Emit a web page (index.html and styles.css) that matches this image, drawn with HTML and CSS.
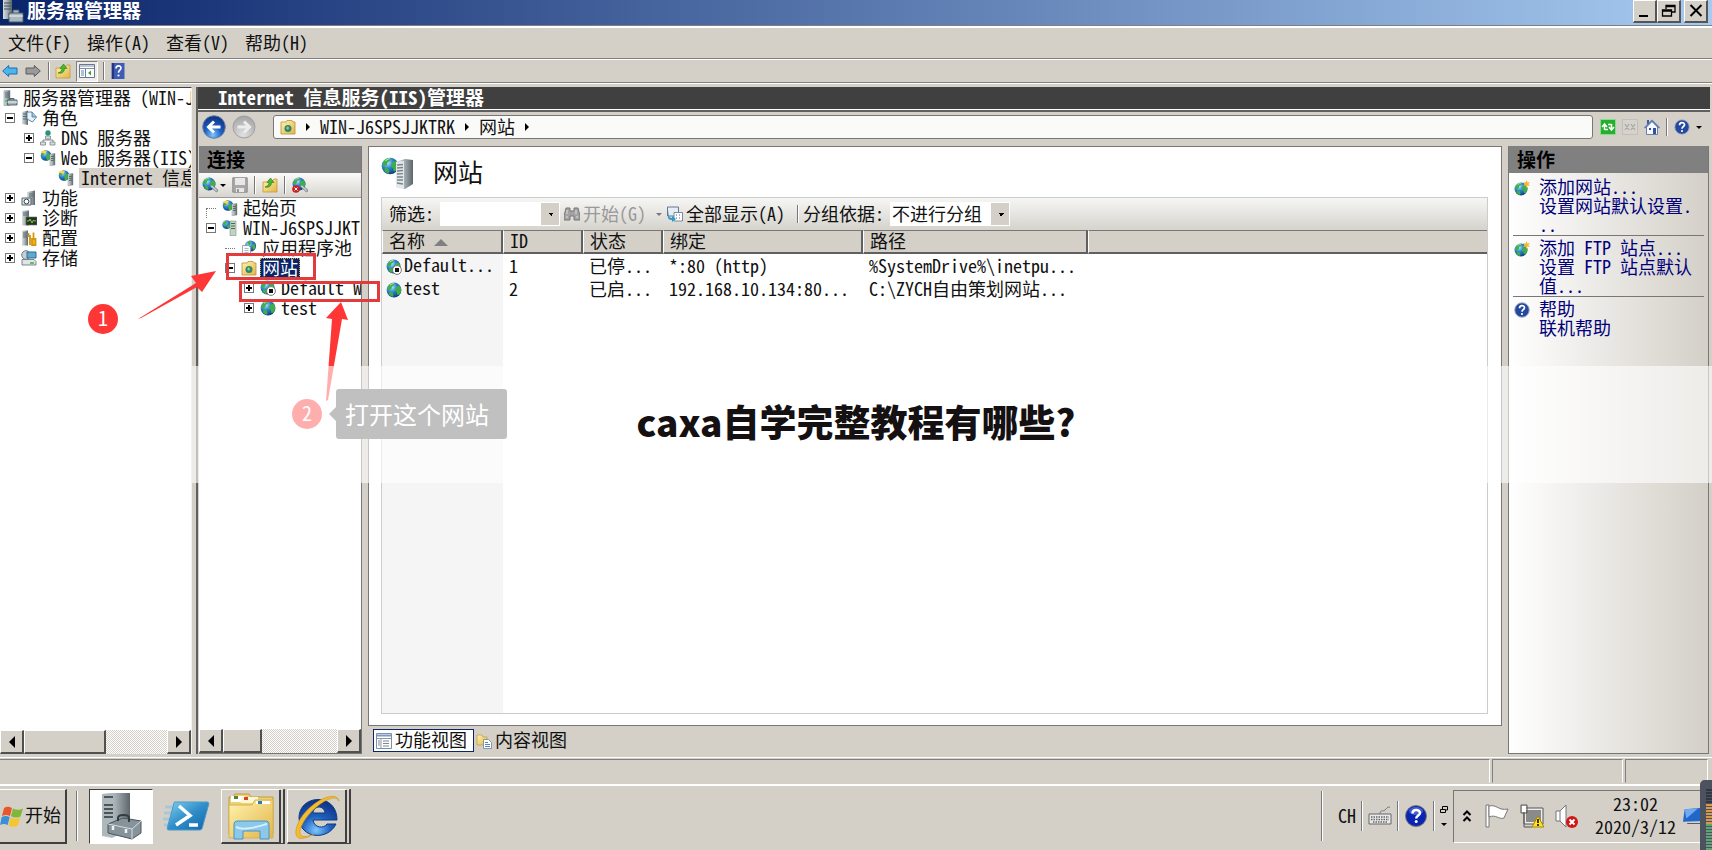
FILE: index.html
```html
<!DOCTYPE html>
<html lang="zh-CN">
<head>
    <meta charset="UTF-8">
    <meta name="viewport" content="width=device-width, initial-scale=1.0">
    <title>服务器管理器</title>
    <link rel="stylesheet" href="styles.css">
</head>
<body>
    <!-- icon sprite -->
    <svg class="sprite" width="0" height="0" aria-hidden="true">
        <defs>
            <radialGradient id="sea" cx="35%" cy="30%" r="75%">
                <stop offset="0" stop-color="#b8e4ff"/><stop offset=".45" stop-color="#2d86d2"/><stop offset="1" stop-color="#0b3a78"/>
            </radialGradient>
            <linearGradient id="metal" x1="0" x2="1">
                <stop offset="0" stop-color="#d9dfe0"/><stop offset=".5" stop-color="#a3acb0"/><stop offset="1" stop-color="#5c666b"/>
            </linearGradient>
            <linearGradient id="gold" x1="0" y1="0" x2="1" y2="1">
                <stop offset="0" stop-color="#fff4b0"/><stop offset="1" stop-color="#e2b548"/>
            </linearGradient>
            <radialGradient id="blueball" cx="45%" cy="85%" r="85%">
                <stop offset="0" stop-color="#7cc8ff"/><stop offset=".45" stop-color="#1f5fc0"/><stop offset="1" stop-color="#0d2f80"/>
            </radialGradient>
            <radialGradient id="grayball" cx="45%" cy="85%" r="85%">
                <stop offset="0" stop-color="#e0e0e0"/><stop offset="1" stop-color="#a4a4a4"/>
            </radialGradient>
            <linearGradient id="shell" x1="0" x2="1" y2="1">
                <stop offset="0" stop-color="#7fd0ee"/><stop offset=".5" stop-color="#2f8ec9"/><stop offset="1" stop-color="#1264a8"/>
            </linearGradient>
            <symbol id="globe" viewBox="0 0 16 16">
                <circle cx="8" cy="8" r="7.4" fill="url(#sea)"/>
                <path d="M2 4.5C4 1.5 7 .8 8.6 1l-.5 2.2-2.2 1.5-.6 2.4L3 8.2 1 7.4zM9.8 5.2l3.2-1.8 2 2.6.3 3-1.7 3.4-2.3.5-.6-2.9-2-1.7zM3.5 9.4l3.2 1.2.8 2.4-1 2.1L3 12.7z" fill="#3fae49"/>
                <path d="M4 3.4c1.5-1.6 3.4-1.9 4-1.8" stroke="#d5f5c8" fill="none" opacity=".8"/>
            </symbol>
            <symbol id="server" viewBox="0 0 16 16">
                <path d="M2 .8l6-.3v14.7l-6 .3z" fill="url(#metal)" stroke="#777f83" stroke-width=".5"/>
                <path d="M3 3h4M3 5h4M3 7h4" stroke="#59656a"/>
                <rect x="3" y="10" width="2" height="2" fill="#49d75a"/>
                <path d="M5.500 10h9.500v5H5.500zM8 10V8.500h4V10" fill="#a9b4ba" stroke="#4e5d66" stroke-width=".9"/>
                <path d="M5.500 12h9.500" stroke="#eef2f4"/>
            </symbol>
            <symbol id="web-server" viewBox="0 0 16 16">
                <circle cx="6" cy="5.500" r="5.300" fill="url(#sea)"/>
                <path d="M1 4C2 1.500 4.500.400 6 .500L5 3.500 3 6.500zM6 6l3-3 2 3-2 4-2 .5z" fill="#47ae48"/>
                <path d="M0 2C3 .3 5 .5 7 1L5 4z" fill="#ffd44c"/>
                <path d="M10 4l5-.5V15l-5 .8z" fill="url(#metal)" stroke="#748084" stroke-width=".4"/>
                <path d="M11 6.500l3-.3M11 8.500l3-.3M11 10.500l3-.3" stroke="#4d6a62"/>
            </symbol>
            <symbol id="node" viewBox="0 0 16 16">
                <circle cx="4.700" cy="4.700" r="4.400" fill="url(#sea)"/>
                <path d="M1 3l3-2.500L5 3 3 6zM5 6l3-2v3L6 9z" fill="#47ae48"/>
                <path d="M8 1h6v14.500H8z" fill="#c2d3c4" stroke="#6e8070" stroke-width=".5"/>
                <path d="M9 3.500h4M9 6h4M9 8.500h4" stroke="#3d6d57"/>
            </symbol>
            <symbol id="roles" viewBox="0 0 16 16">
                <path d="M1 2l6-1.500V15l-6-1z" fill="url(#metal)"/>
                <path d="M2 4h4M2 6.500h4M2 9h4" stroke="#5a6b75"/>
                <path d="M6 2h5l4.500 5-4 5-5.500-3z" fill="#e6f2fa" stroke="#3e6c8c" stroke-width=".8"/>
                <path d="M11 2v5h4.500" fill="#9cc4df" stroke="#3e6c8c" stroke-width=".7"/>
            </symbol>
            <symbol id="dns" viewBox="0 0 16 16">
                <circle cx="8" cy="3" r="2.700" fill="#23947c"/>
                <path d="M8 6v4M3 12v-2h10v2" stroke="#7a868c" fill="none"/>
                <path d="M5.500 6h5v3h-5zM.5 12h5v3h-5zM10 12h5v3h-5z" fill="#d5dbde" stroke="#7b888e" stroke-width=".8"/>
            </symbol>
            <symbol id="feature" viewBox="0 0 16 16">
                <path d="M6 2l8-1.500V15H6z" fill="url(#metal)"/>
                <path d="M8 4h5M8 6h5" stroke="#5a6b75"/>
                <path d="M1 8h9v7H1z" fill="#dfe4e6" stroke="#59646a"/>
                <circle cx="5.500" cy="11.500" r="2.400" fill="#fff" stroke="#38424a"/>
            </symbol>
            <symbol id="diag" viewBox="0 0 16 16">
                <path d="M1 .8l7-.3v15H1z" fill="url(#metal)"/>
                <path d="M2 3h5M2 5h5" stroke="#5a6b75"/>
                <path d="M5 7h11v8H5z" fill="#26331f" stroke="#67746b" stroke-width=".6"/>
                <path d="M6 11h2l1-2 2 4 1.500-3 1 1H15" stroke="#8fdc5c" fill="none" stroke-width=".9"/>
            </symbol>
            <symbol id="config" viewBox="0 0 16 16">
                <path d="M1 .8l6-.3v15H1z" fill="url(#metal)"/>
                <path d="M2 3h4M2 5h4M2 7h4" stroke="#5a6b75"/>
                <path d="M7.500 3v3h1.500v9M12.500 8V2.500M11 9h3.500v6H11z" fill="#f5b820" stroke="#d39710" stroke-width="1.800"/>
            </symbol>
            <symbol id="storage" viewBox="0 0 16 16">
                <circle cx="5" cy="5" r="4.300" fill="#c5d1d6" stroke="#6f7f88"/>
                <path d="M6 2h9v6H6z" fill="#5ca9d4" stroke="#38698a"/>
                <path d="M1 9.500h12l2 2V15H1z" fill="#dfe4e6" stroke="#606c72" stroke-width=".8"/>
                <path d="M9 13h4" stroke="#38b04a" stroke-width="1.500"/>
            </symbol>
            <symbol id="pool" viewBox="0 0 16 16">
                <circle cx="9.500" cy="6" r="5.600" fill="url(#sea)"/>
                <path d="M6 2l3-1.500 1 3-2 2zM11 5l3-1 .5 4-2.500 2z" fill="#47ae48"/>
                <path d="M1.500 5.500h6l2 2V15h-8z" fill="#f8fafb" stroke="#8b979c" stroke-width=".8"/>
                <path d="M3.500 8.500h4M3.500 10.500h4M3.500 12.500h4" stroke="#9baab2" stroke-width=".8"/>
            </symbol>
            <symbol id="sites" viewBox="0 0 16 16">
                <path d="M1 3h5l1-1.500h5L13 3h2v12H1z" fill="url(#gold)" stroke="#b88f33" stroke-width=".8"/>
                <circle cx="8" cy="9.500" r="3.500" fill="#2e8573"/><path d="M6 9l2-2 1 2-1 2z" fill="#8ed56a"/>
            </symbol>
            <symbol id="up-folder" viewBox="0 0 16 16">
                <path d="M1 5h4l1-1.500h5L12 2h3v13H1z" fill="url(#gold)" stroke="#c39a3b" stroke-width=".8"/>
                <path d="M3 10c3-.5 4-2.500 4-4.500H5L8.500 1 12 5.500H9.500C9.500 9 7 11 3 10z" fill="#48b833" stroke="#287a1b" stroke-width=".6"/>
            </symbol>
            <symbol id="stopped" viewBox="0 0 16 16">
                <use href="#globe" width="15" height="15"/>
                <circle cx="11" cy="11" r="4.400" fill="#fff" stroke="#777"/><path d="M9 9h4v4H9z" fill="#111"/>
            </symbol>
            <symbol id="connect" viewBox="0 0 16 16">
                <path d="M9 8l7 5-1 2-7-5z" fill="#c6cfd3" stroke="#74858d" stroke-width=".7"/>
                <use href="#globe" width="14" height="14"/>
                <path d="M8 9l2-1 5.500 5-1 2z" fill="#c6cfd3" stroke="#74858d" stroke-width=".7"/>
            </symbol>
            <symbol id="disconnect" viewBox="0 0 16 16">
                <use href="#connect" width="16" height="16"/>
                <circle cx="4" cy="12" r="3.800" fill="#c9211e"/><path d="M2.500 10.500l3 3m0-3l-3 3" stroke="#fff"/>
            </symbol>
            <symbol id="add-site" viewBox="0 0 16 16">
                <use href="#globe" y="2" width="14" height="14"/>
                <path d="M12.500 0l1 2.500 2.500-.5-1.500 2 1.500 2-2.500-.5-1 2.500-1-2.500-2.500.5 1.500-2-1.500-2 2.500.5z" fill="#f9b53a"/>
            </symbol>
            <symbol id="help" viewBox="0 0 16 16">
                <circle cx="8" cy="8" r="7.300" fill="#24489d" stroke="#a9b5cc"/>
                <path d="M5.500 6.200c0-3.500 5-3.300 5-.5C10.500 7.500 8 7.500 8 9.700" fill="none" stroke="#fff" stroke-width="1.700"/><circle cx="8" cy="12" r="1.100" fill="#fff"/>
            </symbol>
            <symbol id="save" viewBox="0 0 16 16">
                <path d="M.8.800h14.400v14.400H.800z" fill="#a8a8a8" stroke="#8b8b8b"/><path d="M3 1h10v7H3zM4 11h8v4H4z" fill="#e8e8e8"/><path d="M5 12h2v3H5z" fill="#999"/>
            </symbol>
            <symbol id="window" viewBox="0 0 16 16">
                <path d="M.5.500h15v15H.500z" fill="#fff" stroke="#7f8fa6"/><path d="M1 2.500h14" stroke="#7c98c6" stroke-width="2"/>
                <path d="M5 5v10M1 5.500h14" stroke="#8797ac"/><path d="M2 8h2M2 10h2M2 12h2M7 8h6M7 10.500h6M7 13h6" stroke="#7b8795"/>
            </symbol>
            <symbol id="content" viewBox="0 0 16 16">
                <path d="M1 2h5l1 2h4v8H1z" fill="url(#gold)" stroke="#c39a3b" stroke-width=".7"/>
                <path d="M7.500 6.500h5l3 3v6h-8z" fill="#fff" stroke="#6685a5" stroke-width=".8"/><path d="M9 9.500h3M9 11.500h5M9 13.500h5" stroke="#5a86b8"/>
            </symbol>
        </defs>
    </svg>

    <header class="titlebar">
        <svg class="title-icon" viewBox="0 0 24 24"><path d="M3 0h9v19H3z" fill="url(#metal)"/><path d="M4 3h7M4 6h7M4 9h7" stroke="#3f5158"/><path d="M9 13h14v9H9zM13 13v-3h6v3" fill="#aab8bf" stroke="#46596a"/><path d="M9 16h14" stroke="#eef2f4"/></svg>
        <h1>服务器管理器</h1>
        <div class="window-buttons">
            <button type="button" aria-label="最小化"><svg viewBox="0 0 16 16"><path d="M2 13h9" stroke="#000" stroke-width="2"/></svg></button>
            <button type="button" aria-label="还原"><svg viewBox="0 0 16 16"><path d="M5 6V2.500h9V9h-3M5 3.500h9M1.500 7h9v6h-9zM1.500 8h9" fill="none" stroke="#000" stroke-width="1.300"/></svg></button>
            <button type="button" class="close" aria-label="关闭"><svg viewBox="0 0 16 16"><path d="M2.500 2l11 11m0-11l-11 11" stroke="#000" stroke-width="2"/></svg></button>
        </div>
    </header>
    <nav class="menubar">
        <button type="button">文件(F)</button>
        <button type="button">操作(A)</button>
        <button type="button">查看(V)</button>
        <button type="button">帮助(H)</button>
    </nav>
    <div class="toolbar">
        <div class="nav">
            <button type="button" aria-label="后退"><svg class="icon" viewBox="0 0 16 16"><path d="M.7 8l6-5.500V5H15v6H6.700v2.500z" fill="#4bb5ec" stroke="#1b6fae"/></svg></button>
            <button type="button" aria-label="前进"><svg class="icon" viewBox="0 0 16 16"><path d="M15.300 8l-6-5.500V5H1v6h8.300v2.500z" fill="#9a9a9a" stroke="#5c5c5c"/></svg></button>
        </div>
        <i class="sep"></i>
        <button type="button" aria-label="向上"><svg class="icon"><use href="#up-folder"/></svg></button>
        <button type="button" class="pressed" aria-label="显示控制台树"><svg class="icon" viewBox="0 0 16 16"><path d="M.5 1.500h15v13H.500z" fill="#fff" stroke="#68788c"/><path d="M1 3h14M1 5.500h14" stroke="#7d90aa"/><path d="M6.500 6v8M2 8h3M2 10h3M2 12h3" stroke="#5f83a8"/><path d="M12 7.500v5L9 10z" fill="#3aa03a"/></svg></button>
        <i class="sep"></i>
        <button type="button" aria-label="帮助"><svg class="icon" viewBox="0 0 16 16"><path d="M1.500 0h13v16h-13z" fill="#3e5cb5"/><path d="M2 0h2v16H2z" fill="#23367d"/><path d="M6 5.500c0-3.500 5-3.300 5-.5C11 7 8.500 7.200 8.500 9.700" fill="none" stroke="#fff" stroke-width="1.600"/><circle cx="8.500" cy="12.500" r="1.100" fill="#fff"/></svg></button>
    </div>

    <main class="workspace">
        <aside class="console">
            <ul class="tree">
                <li class="root"><svg class="icon"><use href="#server"/></svg><span>服务器管理器 (WIN-J6SPSJJKTRK)</span></li>
                <li><i class="box minus"></i><svg class="icon"><use href="#roles"/></svg><span>角色</span></li>
                <li class="level-2"><i class="box"></i><svg class="icon"><use href="#dns"/></svg><span>DNS 服务器</span></li>
                <li class="level-2"><i class="box minus"></i><svg class="icon"><use href="#web-server"/></svg><span>Web 服务器(IIS)</span></li>
                <li class="level-3"><svg class="icon"><use href="#web-server"/></svg><span class="current">Internet 信息服务</span></li>
                <li><i class="box"></i><svg class="icon"><use href="#feature"/></svg><span>功能</span></li>
                <li><i class="box"></i><svg class="icon"><use href="#diag"/></svg><span>诊断</span></li>
                <li><i class="box"></i><svg class="icon"><use href="#config"/></svg><span>配置</span></li>
                <li><i class="box"></i><svg class="icon"><use href="#storage"/></svg><span>存储</span></li>
            </ul>
            <div class="scrollbar">
                <button type="button" class="left" aria-label="向左滚动"></button>
                <i class="thumb wide"></i>
                <button type="button" class="right" aria-label="向右滚动"></button>
            </div>
        </aside>

        <section class="iis">
            <h2 class="iis-title">Internet 信息服务(IIS)管理器</h2>
            <div class="address-row">
                <div class="history">
                    <button type="button" aria-label="后退"><svg viewBox="0 0 24 24"><circle cx="12" cy="12" r="11.300" fill="url(#blueball)" stroke="#6c7fa8"/><path d="M18.500 12H7m5-5.500L6.500 12l5.500 5.500" fill="none" stroke="#fff" stroke-width="3"/></svg></button>
                    <button type="button" aria-label="前进"><svg viewBox="0 0 24 24"><circle cx="12" cy="12" r="11" fill="url(#grayball)" stroke="#a0a0a0"/><path d="M5.500 12H17m-5-5.500l5.500 5.500-5.500 5.500" fill="none" stroke="#ececec" stroke-width="3"/></svg></button>
                </div>
                <div class="address">
                    <svg class="icon"><use href="#sites"/></svg><i class="arrow"></i><a href="#">WIN-J6SPSJJKTRK</a><i class="arrow"></i><a href="#">网站</a><i class="arrow"></i>
                </div>
                <div class="address-tools">
                    <button type="button" aria-label="刷新"><svg class="icon" viewBox="0 0 16 16"><path d="M.5.500h15v15H.500z" fill="#23b12d" stroke="#8fd892"/><path d="M4.500 11V6M2 8l2.500-3L7 8M4.500 10.500H8M11.500 5v5M9 8l2.500 3L14 8M11.500 5.500H8" fill="none" stroke="#fff" stroke-width="1.500"/></svg></button>
                    <button type="button" aria-label="停止"><svg class="icon" viewBox="0 0 16 16"><path d="M.5.500h15v15H.500z" fill="#d6d3cd" stroke="#c2bfb9"/><path d="M3 5l4 6m0-6l-4 6M9 5l4 6m0-6l-4 6" stroke="#a9a9a9" stroke-width="1.300"/></svg></button>
                    <button type="button" aria-label="主页"><svg class="icon" viewBox="0 0 16 16"><path d="M3 1h2v4H3z" fill="#4256a3"/><path d="M2.500 8v7.500h11V8L8 2.500z" fill="#f5f8fc" stroke="#6c80ad"/><path d="M.5 9L8 1.500 15.500 9" fill="none" stroke="#5a77b7" stroke-width="1.500"/><path d="M9 9h3v6H9zM5 9h2v2H5z" fill="#3450a0"/></svg></button>
                    <i class="sep"></i>
                    <button type="button" aria-label="帮助"><svg class="icon"><use href="#help"/></svg><i class="down"></i></button>
                </div>
            </div>

            <div class="panes">
                <aside class="connections">
                    <h3 class="pane-title">连接</h3>
                    <div class="pane-tools">
                        <button type="button" aria-label="创建新连接"><svg class="icon"><use href="#connect"/></svg><i class="down"></i></button>
                        <button type="button" aria-label="保存连接"><svg class="icon"><use href="#save"/></svg></button>
                        <i class="sep"></i>
                        <button type="button" aria-label="向上"><svg class="icon"><use href="#up-folder"/></svg></button>
                        <i class="sep"></i>
                        <button type="button" aria-label="删除连接"><svg class="icon"><use href="#disconnect"/></svg></button>
                    </div>
                    <ul class="tree dotted">
                        <li><i class="dots corner"></i><svg class="icon"><use href="#web-server"/></svg><span>起始页</span></li>
                        <li><i class="box minus"></i><svg class="icon"><use href="#node"/></svg><span>WIN-J6SPSJJKTRK</span></li>
                        <li class="level-2"><i class="dots"></i><svg class="icon"><use href="#pool"/></svg><span>应用程序池</span></li>
                        <li class="level-2"><i class="box minus"></i><svg class="icon"><use href="#sites"/></svg><span class="selected">网站</span></li>
                        <li class="level-3"><i class="box"></i><svg class="icon"><use href="#stopped"/></svg><span>Default Web Site</span></li>
                        <li class="level-3"><i class="box"></i><svg class="icon"><use href="#globe"/></svg><span>test</span></li>
                    </ul>
                    <div class="scrollbar">
                        <button type="button" class="left" aria-label="向左滚动"></button>
                        <i class="thumb"></i>
                        <button type="button" class="right" aria-label="向右滚动"></button>
                    </div>
                </aside>

                <div class="center">
                    <section class="feature">
                        <div class="feature-head">
                            <svg viewBox="0 0 32 32"><use href="#globe" width="18" height="18"/><path d="M15 5l9-3 8 1v24l-8 5-9-2z" fill="url(#metal)"/><path d="M15 5l8-1v28l-8-2z" fill="#e3e8e9"/><path d="M16 8l6-.5M16 11l6-.5M16 14l6-.5M16 17l6-.3M16 20h6M16 23h6M16 26l6 1" stroke="#78858a" stroke-width="1.300"/></svg>
                            <h2>网站</h2>
                        </div>
                        <div class="grid">
                            <div class="filter">
                                <label for="filter">筛选:</label>
                                <select id="filter" class="combo"><option></option></select>
                                <button type="button" class="go" disabled><svg class="icon" viewBox="0 0 16 16"><path d="M2 2h4v3h4V2h4l2 8v4h-6v-4H6v4H0v-4z" fill="#a3a3a3" stroke="#777"/><path d="M3 4v4M12 4v4M2 11h2M12 11h2" stroke="#ddd"/></svg><span>开始(G)</span></button>
                                <i class="down gray"></i>
                                <button type="button" class="show-all"><svg class="icon" viewBox="0 0 16 16"><path d="M.5 1h11v9H.500z" fill="#e5edf6" stroke="#66788e"/><path d="M7 6.500h8.500V15H7z" fill="#fff" stroke="#7b8998"/><path d="M9 9h1m2 0h1M9 12h1m2 0h1" stroke="#3b73a8"/><path d="M2 4v5c0 2 1 3 3 3V10l4 3-4 3v-2c-3 0-4-1-4-3z" fill="#2d9bc8"/></svg><span>全部显示(A)</span></button>
                                <i class="sep"></i>
                                <label for="group">分组依据:</label>
                                <select id="group" class="combo"><option>不进行分组</option></select>
                            </div>
                            <table>
                                <thead>
                                    <tr><th class="name">名称 <i class="sort"></i></th><th class="short">ID</th><th class="short">状态</th><th class="binding">绑定</th><th class="path">路径</th><th></th></tr>
                                </thead>
                                <tbody>
                                    <tr><td><svg class="icon"><use href="#stopped"/></svg>Default...</td><td>1</td><td>已停...</td><td>*:80 (http)</td><td>%SystemDrive%\inetpu...</td><td></td></tr>
                                    <tr><td><svg class="icon"><use href="#globe"/></svg>test</td><td>2</td><td>已启...</td><td>192.168.10.134:80...</td><td>C:\ZYCH自由策划网站...</td><td></td></tr>
                                </tbody>
                            </table>
                        </div>
                    </section>
                    <div class="views">
                        <button type="button" class="active"><svg class="icon"><use href="#window"/></svg><span>功能视图</span></button>
                        <button type="button"><svg class="icon"><use href="#content"/></svg><span>内容视图</span></button>
                    </div>
                </div>

                <aside class="actions">
                    <h3 class="pane-title">操作</h3>
                    <div class="action-group">
                        <svg class="icon"><use href="#add-site"/></svg>
                        <div><a href="#">添加网站...</a><a href="#">设置网站默认设置...</a></div>
                    </div>
                    <div class="action-group">
                        <svg class="icon"><use href="#add-site"/></svg>
                        <div><a href="#">添加 FTP 站点...</a><a href="#">设置 FTP 站点默认值...</a></div>
                    </div>
                    <div class="action-group">
                        <svg class="icon"><use href="#help"/></svg>
                        <div><a href="#">帮助</a><a href="#">联机帮助</a></div>
                    </div>
                </aside>
            </div>
        </section>
    </main>

    <div class="statusbar"><i></i><i></i><i></i></div>

    <footer class="taskbar">
        <button type="button" class="start"><svg viewBox="0 0 24 24"><path d="M4 4c3-2 5-1.500 8 0l-2 8c-3-1.500-5-1.500-8 0z" fill="#e8562a"/><path d="M13 4.500c3 1.500 6 2 10 0l-2.500 8c-3 1.500-6 1.500-9.500-.3z" fill="#7db83a"/><path d="M1.700 13c3-1.500 5-1.500 8 0l-2 8c-3-1.500-5-1.500-7.700 0z" fill="#3b8fd6"/><path d="M10.700 13.500c3 1.700 6 1.700 9.500 0l-2.300 8c-3 1.700-6 1.500-9.300 0z" fill="#f7c52d"/></svg><span>开始</span></button>
        <i class="sep tall"></i>
        <button type="button" class="task open" aria-label="服务器管理器"><svg viewBox="0 0 48 48"><path d="M5 2l10-1h18v36l-18 9-10-2z" fill="url(#metal)"/><path d="M5 2l11-1v44l-11-1z" fill="#aeb8bb"/><path d="M7 5h9M7 13h9M7 17h9M7 21h9M7 25h9" stroke="#4a565c" stroke-width="2"/><path d="M11 32l15-6 18 3v12l-9 6-24-6z" fill="#87939b" stroke="#48545b"/><path d="M11 32l24 5 9-8M35 37v10" stroke="#d5dde1" fill="none"/><path d="M21 29v-3c0-4 11-4 11 0v4" fill="none" stroke="#333c42" stroke-width="2"/><path d="M16 34v4M29 37v4" stroke="#eef2f4" stroke-width="2.500"/></svg></button>
        <button type="button" class="task flat" aria-label="PowerShell"><svg viewBox="0 0 48 48"><path d="M2 15h8M1 21h7M0 27h7M1 33h6" stroke="#8bc4e4" stroke-width="3" opacity=".6"/><path d="M12 10h32c2 0 2 1 1.500 3l-6 22c-.5 2-1 3-3 3H6c-2 0-2-1-1.500-3l6-22c.5-2 0-3 1.500-3z" fill="url(#shell)" stroke="#4b9ac9"/><path d="M16 14l11 9.500L13 33M26 33h9" fill="none" stroke="#fff" stroke-width="3.500"/></svg></button>
        <button type="button" class="task stack" aria-label="资源管理器"><svg viewBox="0 0 48 48"><path d="M2 5h4l2-3h14l2 3h22v37H2z" fill="#ecd271" stroke="#c39a3b"/><path d="M4 4h14v6H4z" fill="#fff"/><path d="M7 4h4v3H7z" fill="#528044"/><path d="M14 5h17v6H14z" fill="#fff7d4"/><path d="M17 5h4v3h-4z" fill="#d2452d"/><path d="M2 13h23l3-5h18v38H2z" fill="url(#gold)" stroke="#d6b351"/><path d="M29 9h14v3H29z" fill="#fff"/><path d="M31 9h4v3h-4z" fill="#2f7cae"/><path d="M7 47V33c0-3 1-4 4-4h27c3 0 4 1 4 4v14h-9v-8H16v8z" fill="#8bc8ea" stroke="#4c94c0"/><path d="M9 35c8 4 20 0 31-3" stroke="#d4efff" fill="none" stroke-width="2"/></svg></button>
        <button type="button" class="task stack" aria-label="Internet Explorer"><svg viewBox="0 0 48 48"><path d="M44 28H20c1 8 11 9 14 4h9C35 49 7 47 6 26 6 2 44 0 44 28zM20 21h12c-1-8-11-8-12 0z" fill="url(#blueball)" stroke="#0b3c7e" fill-rule="evenodd"/><path d="M46 9C43-4 12 12 4 34-1 50 11 48 21 42 8 48 4 43 9 33 17 16 42-1 46 9z" fill="#f5bb2f" stroke="#cf9317" stroke-width=".6"/></svg></button>

        <div class="language">
            <span>CH</span><i class="sep"></i>
            <button type="button" aria-label="键盘"><svg class="tray-icon" viewBox="0 0 24 24"><path d="M1 10h22v10H1z" fill="#e9e9e9" stroke="#666"/><path d="M3 13h18M3 15.500h18M5 18h14" stroke="#666" stroke-width="1.500" stroke-dasharray="1.500 1"/><path d="M12 10c0-5 3-2 5-4s2-3 5-3" fill="none" stroke="#777"/></svg></button><i class="sep"></i>
            <button type="button" aria-label="帮助"><svg class="tray-icon" viewBox="0 0 24 24"><circle cx="12" cy="12" r="10.500" fill="#0a24b4" stroke="#777"/><ellipse cx="12" cy="7" rx="7" ry="4" fill="#7d93e8" opacity=".5"/><path d="M8.500 9.500c0-5 7.500-4.500 7.500-.5 0 2.500-3.800 2.700-3.800 5.500" fill="none" stroke="#fff" stroke-width="2.500"/><circle cx="12.200" cy="17.500" r="1.500" fill="#fff"/></svg></button><i class="sep"></i>
            <div class="options"><svg viewBox="0 0 8 8"><path d="M2.500 3V.500h5V4H5.500M.5 3.500h5v3h-5z" fill="none" stroke="#000"/></svg><i class="down"></i></div>
        </div>
        <div class="tray">
            <button type="button" class="chevrons" aria-label="显示隐藏的图标"><svg viewBox="0 0 10 14"><path d="M1.500 6L5 2.500 8.500 6M1.500 12L5 8.500 8.500 12" fill="none" stroke="#000" stroke-width="2"/></svg></button>
            <svg class="tray-icon" viewBox="0 0 24 24"><path d="M1 1h3v22H1z" fill="#fff" stroke="#777"/><path d="M4 2c8-2 9 5 19 3l-4 9c-5 2-8-4-15-1z" fill="#fff" stroke="#777"/></svg>
            <svg class="tray-icon" viewBox="0 0 24 24"><path d="M5 5h17v14H5z" fill="#8a8a8a" stroke="#eee" stroke-width="2"/><path d="M4 4h19v16H4zM1 1h6v8H1zM4 9v14h8" fill="none" stroke="#555"/><path d="M2 2h4v6H2z" fill="#fff"/><path d="M18 12l6 11H12z" fill="#ffe21d" stroke="#a88600"/><path d="M18 15v4M18 20v2" stroke="#000" stroke-width="1.500"/></svg>
            <svg class="tray-icon" viewBox="0 0 24 24"><path d="M1 7h4l6-6v22l-6-6H1zM5 7v10" fill="#fff" stroke="#777"/><circle cx="17" cy="18" r="6" fill="#cf1717"/><path d="M14.500 15.500l5 5m0-5l-5 5" stroke="#fff" stroke-width="2"/></svg>
            <div class="clock"><time>23:02</time><time>2020/3/12</time></div>
            <svg class="desktop" viewBox="0 0 24 20"><path d="M2 2l22-2v16L0 17z" fill="#2166c9"/><path d="M2 2l16-1L4 13z" fill="#70aaf0"/><path d="M5 19h18" stroke="#33495c"/></svg>
        </div>
    </footer>

    <!-- step marks over the window -->
    <i class="mark mark-site"></i>
    <i class="mark mark-default"></i>
    <svg class="arrow-one" viewBox="0 0 78 48"><path d="M0 48L58 12l-5-7 25-5-14 21-5-5L3 47z" fill="#ff3636"/></svg>
    <svg class="arrow-two" viewBox="0 0 22 100"><path d="M0 99L6 17l-6-1L15 0l7 18-6-1L2 98z" fill="#ff3636"/></svg>
    <span class="step step-one">1</span>
    <span class="step step-two">2</span>
    <div class="band"><strong>caxa自学完整教程有哪些?</strong></div>
    <div class="tip">打开这个网站</div>
    <svg class="gadget" viewBox="0 0 12 70"><path d="M12 0H5C2 0 0 2 0 5v65h12z" fill="#4c535f"/><path d="M9 9v15" stroke="#303743" stroke-width="6" stroke-dasharray="2 1"/><path d="M9 24v20" stroke="#d59b4b" stroke-width="6" stroke-dasharray="2 1"/><path d="M9 44v26" stroke="#5ea477" stroke-width="6" stroke-dasharray="2 1"/></svg>
</body>
</html>
```

FILE: styles.css
```css
* {
    box-sizing: border-box;
}
body {
    margin: 0;
    min-height: 100vh;
    display: flex;
    flex-direction: column;
    position: relative;
    overflow: hidden;
    background: #d4d0c8;
    color: #111;
    font: 18px/20px "Noto Sans Mono CJK SC", "Noto Sans CJK SC", sans-serif;
}
h1, h2, h3, ul {
    margin: 0;
    padding: 0;
    font-weight: normal;
}
button, select {
    margin: 0;
    padding: 0;
    border: 0;
    border-radius: 0;
    background: none;
    color: inherit;
    font: inherit;
}
button {
    display: flex;
    align-items: center;
    white-space: nowrap;
}
button span, label {
    padding-bottom: 3px;
    white-space: nowrap;
}
svg {
    display: block;
    flex: none;
}
a {
    color: inherit;
    text-decoration: none;
}
.sprite {
    position: absolute;
}
.icon {
    width: 16px;
    height: 16px;
}
.sep {
    flex: none;
    width: 2px;
    height: 18px;
    border-left: 1px solid #777;
    border-right: 1px solid #fff;
}
.down {
    flex: none;
    border: 3px solid transparent;
    border-top-color: #000;
    border-bottom: 0;
}
.down.gray {
    border-top-color: #777;
}

/* title, menu and toolbar */
.titlebar {
    display: flex;
    height: 26px;
    padding-right: 4px;
    background: linear-gradient(90deg, #0a246a, #a6caf0);
    border-bottom: 1px solid #808080;
    color: #fff;
}
.title-icon {
    width: 24px;
    height: 24px;
}
h1 {
    flex: 1;
    padding-left: 3px;
    font-size: 19px;
    font-weight: bold;
    line-height: 20px;
}
.window-buttons {
    display: flex;
}
.window-buttons button {
    width: 24px;
    height: 23px;
    justify-content: center;
    background: #d4d0c8;
    border: 1px solid #fff;
    border-right: 2px solid #555;
    border-bottom: 2px solid #555;
}
.window-buttons svg {
    width: 16px;
    height: 16px;
}
.window-buttons .close {
    margin-left: 3px;
}
.menubar {
    display: flex;
    gap: 16px;
    height: 33px;
    padding: 0 8px 2px;
    border-top: 2px solid #fff;
    border-bottom: 1px solid #808080;
}
.toolbar {
    display: flex;
    align-items: center;
    gap: 5px;
    height: 24px;
    padding-left: 2px;
    border-top: 1px solid #fff;
    border-bottom: 1px solid #808080;
}
.toolbar .nav {
    display: flex;
    gap: 7px;
    padding-right: 2px;
}
.toolbar .pressed {
    width: 22px;
    height: 21px;
    justify-content: center;
    background: #eeece8;
    border: 1px solid #808080;
    border-right-color: #fff;
    border-bottom-color: #fff;
}

/* console tree */
.workspace {
    flex: 1;
    display: flex;
    gap: 4px;
    min-height: 0;
    padding: 3px 2px 3px 0;
    border-top: 1px solid #fff;
    border-bottom: 1px solid #fff;
}
.console {
    width: 192px;
    display: flex;
    flex-direction: column;
    background: #fff;
    border-top: 1px solid #404040;
    border-right: 1px solid #f4f2ee;
}
.tree {
    flex: 1;
    overflow: hidden;
    list-style: none;
}
.tree li {
    display: flex;
    align-items: center;
    height: 20px;
    padding-left: 5px;
    white-space: nowrap;
}
.tree span {
    min-width: 0;
    height: 20px;
    overflow: hidden;
    line-height: 18px;
}
.tree .root {
    padding-left: 2px;
}
.tree .level-2 {
    padding-left: 24px;
}
.tree .level-3 {
    padding-left: 58px;
}
.tree .icon {
    margin: 0 5px 0 6px;
}
.tree .root .icon,
.console .level-3 .icon {
    margin-left: 0;
}
.tree .current,
.tree .selected {
    padding: 0 2px;
}
.current {
    background: #d4d0c8;
}
.tree .selected {
    margin-left: -2px;
    background: #0a246a;
    color: #fff;
    outline: 1px dotted #c9a85c;
    outline-offset: -1px;
}
.box {
    flex: none;
    width: 10px;
    height: 10px;
    background: linear-gradient(#000, #000) center / 6px 2px no-repeat, linear-gradient(#000, #000) center / 2px 6px no-repeat, #fff;
    border: 1px solid #777;
}
.box.minus {
    background: linear-gradient(#000, #000) center / 6px 2px no-repeat, #fff;
}
.scrollbar {
    display: flex;
    height: 24px;
    background: repeating-conic-gradient(#fff 0 25%, #d4d0c8 0 50%) 0 0 / 2px 2px;
}
.scrollbar button,
.thumb {
    width: 24px;
    justify-content: center;
    background: #d4d0c8;
    border: 1px solid #fff;
    border-right: 2px solid #505050;
    border-bottom: 2px solid #505050;
}
.scrollbar button::before {
    content: "";
    border: 6px solid transparent;
}
.scrollbar .left::before {
    border-left: 0;
    border-right-color: #000;
}
.scrollbar .right {
    margin-left: auto;
}
.scrollbar .right::before {
    border-right: 0;
    border-left-color: #000;
}
.thumb {
    width: 39px;
}
.thumb.wide {
    width: 82px;
}

/* IIS manager */
.iis {
    flex: 1;
    min-width: 0;
    display: flex;
    flex-direction: column;
    border-left: 2px solid #606060;
}
.iis-title {
    height: 23px;
    padding-left: 20px;
    background: #404040;
    border-bottom: 1px solid #fff;
    color: #fff;
    font-size: 19px;
    font-weight: bold;
    line-height: 20px;
}
.address-row {
    display: flex;
    align-items: center;
    gap: 7px;
    height: 36px;
    padding: 0 8px 4px 4px;
    border-top: 2px solid #606060;
}
.history {
    display: flex;
    gap: 6px;
    width: 64px;
}
.history svg {
    width: 24px;
    height: 24px;
}
.address {
    flex: 1;
    display: flex;
    align-items: center;
    gap: 10px;
    height: 24px;
    padding-left: 6px;
    background: #fafaf8;
    border: 1px solid #777;
    border-radius: 3px;
}
.address a {
    padding-bottom: 2px;
}
.arrow {
    border: 4px solid transparent;
    border-left-color: #000;
    border-right: 0;
}
.address-tools {
    display: flex;
    align-items: center;
    gap: 6px;
}
.address-tools button {
    gap: 6px;
}
.pane-tools button {
    gap: 2px;
}
.panes {
    flex: 1;
    display: flex;
    gap: 6px;
    min-height: 0;
    padding: 0 1px;
}
.connections {
    width: 163px;
    display: flex;
    flex-direction: column;
    background: #fff;
    border-right: 1px solid #777;
    border-bottom: 1px solid #777;
}
.pane-title {
    height: 27px;
    padding-left: 8px;
    background: #808080;
    color: #000;
    font-size: 19px;
    font-weight: bold;
    line-height: 25px;
}
.pane-tools {
    display: flex;
    align-items: center;
    gap: 6px;
    height: 25px;
    padding-left: 3px;
    background: linear-gradient(#fafaf9, #d8d5ce);
    border-bottom: 1px solid #999;
}
.dotted li {
    padding-left: 7px;
}
.dotted .level-2 {
    padding-left: 26px;
}
.dotted .level-3 {
    padding-left: 45px;
}
.dots {
    width: 10px;
    border-top: 1px dotted #777;
}
.dots.corner {
    align-self: flex-end;
    height: 10px;
    border-left: 1px dotted #777;
}
.center {
    flex: 1;
    min-width: 0;
    display: flex;
    flex-direction: column;
}
.feature {
    flex: 1;
    display: flex;
    flex-direction: column;
    padding: 10px 13px 11px 12px;
    background: #fff;
    border: 1px solid #777;
}
.feature-head {
    display: flex;
    gap: 20px;
    height: 40px;
}
.feature-head svg {
    width: 32px;
    height: 32px;
}
.feature-head h2 {
    font-size: 25px;
    line-height: 28px;
}
.grid {
    flex: 1;
    background: linear-gradient(#f5f5f5, #f5f5f5) 0 0 / 121px 100% no-repeat;
    border: 1px solid #ccc;
}
.filter {
    display: flex;
    align-items: center;
    height: 32px;
    padding-left: 7px;
    background: linear-gradient(#f6f6f5, #d6d3cc);
}
.filter .icon {
    margin-right: 3px;
}
.filter .sep {
    margin: 0 4px 0 12px;
}
.combo {
    width: 120px;
    height: 24px;
    margin: 0 4px 0 6px;
    padding: 0 0 3px 2px;
    appearance: none;
    background: linear-gradient(45deg, transparent 50%, #000 50%) right 9px top 11px / 3px 3px no-repeat, linear-gradient(-45deg, transparent 50%, #000 50%) right 6px top 11px / 3px 3px no-repeat, linear-gradient(#d4d0c8, #d4d0c8) right 1px center / 18px 22px no-repeat, #fff;
}
.go {
    width: 92px;
    color: #999;
}
.show-all {
    margin-left: 5px;
}
table {
    width: 100%;
    table-layout: fixed;
    border-collapse: separate;
    border-spacing: 0;
}
th {
    height: 24px;
    padding: 0 6px 3px;
    background: #d4d0c8;
    border-top: 1px solid #777;
    border-right: 2px solid #606060;
    border-bottom: 2px solid #606060;
    border-left: 1px solid #fff;
    font-weight: normal;
    line-height: 18px;
    text-align: left;
    white-space: nowrap;
}
th:last-child {
    border-right: 0;
}
.name {
    width: 121px;
}
.short {
    width: 80px;
}
.binding {
    width: 200px;
}
.path {
    width: 225px;
}
.sort {
    display: inline-block;
    border: 7px solid transparent;
    border-top: 0;
    border-bottom-color: #808080;
    vertical-align: 2px;
}
td {
    height: 22px;
    padding: 0 0 2px 6px;
    white-space: nowrap;
}
td:first-child {
    padding-left: 4px;
}
td .icon {
    display: inline-block;
    margin-right: 2px;
    vertical-align: -3px;
}
.views {
    display: flex;
    height: 28px;
    padding: 3px 5px;
}
.views button {
    gap: 3px;
    height: 23px;
    padding: 0 2px;
}
.views .active {
    width: 101px;
    background: #fff;
    border: 1px solid #0a246a;
}
.actions {
    width: 201px;
    background: linear-gradient(90deg, #fff, #d4d0c8);
    border: 1px solid #777;
    border-top: 0;
    color: #00007b;
}
.action-group {
    display: flex;
    gap: 9px;
    margin: 0 4px;
    padding: 4px 8px 1px 1px;
    line-height: 19px;
}
.action-group + .action-group {
    padding-top: 2px;
    border-top: 1px solid #777;
}
.action-group .icon {
    margin-top: 3px;
}
.action-group div {
    flex: 1;
    min-width: 0;
}
.action-group a {
    display: block;
    line-break: anywhere;
}

/* status bar and taskbar */
.statusbar {
    display: flex;
    gap: 2px;
    height: 27px;
    padding: 1px 4px 1px 0;
    border-bottom: 1px solid #fff;
}
.statusbar i {
    width: 131px;
    border: 1px solid #808080;
    border-right-color: #fff;
    border-bottom-color: #d4d0c8;
}
.statusbar i:first-child {
    flex: 1;
    border-left: 0;
}
.statusbar i:last-child {
    width: 83px;
}
.taskbar {
    display: flex;
    align-items: center;
    height: 65px;
    padding-bottom: 4px;
    border-top: 1px solid #fff;
}
.start {
    width: 67px;
    height: 55px;
    gap: 1px;
    border-top: 1px solid #fff;
    border-right: 2px solid #404040;
    border-bottom: 2px solid #404040;
}
.start svg {
    width: 24px;
    height: 24px;
}
.sep.tall {
    height: 50px;
    margin: 0 11px 0 9px;
}
.task {
    width: 64px;
    height: 55px;
    margin-right: 2px;
    justify-content: center;
    border: 1px solid #fff;
    border-right: 2px solid #404040;
    border-bottom: 2px solid #404040;
}
.task svg {
    width: 48px;
    height: 48px;
}
.task.open {
    background: #fff;
    border: 1px solid #404040;
    border-right-color: #fff;
    border-bottom-color: #fff;
}
.task.flat {
    border-color: transparent;
}
.task.stack {
    border-right: 6px double #404040;
}
.language {
    display: flex;
    align-items: center;
    gap: 5px;
    height: 50px;
    margin-left: auto;
    padding: 0 5px 0 15px;
    border-left: 1px solid #fff;
    box-shadow: -1px 0 #777;
}
.language span {
    padding-bottom: 3px;
}
.language .sep {
    height: 30px;
}
.tray-icon {
    width: 24px;
    height: 24px;
}
.options {
    display: flex;
    flex-direction: column;
    align-items: center;
    gap: 9px;
    width: 8px;
}
.options svg {
    width: 8px;
    height: 8px;
}
.tray {
    display: flex;
    align-items: center;
    gap: 11px;
    height: 53px;
    padding: 0 9px 0 8px;
    border: 1px solid #777;
    border-right: 0;
    border-bottom-color: #fff;
}
.chevrons {
    margin-right: 2px;
}
.chevrons svg {
    width: 10px;
    height: 14px;
}
.clock {
    display: flex;
    flex-direction: column;
    gap: 3px;
    margin-left: 5px;
    padding-bottom: 3px;
    text-align: center;
}
.desktop {
    width: 20px;
    height: 18px;
    margin-left: -4px;
}

/* marks drawn over the window */
.mark {
    position: absolute;
    border: 3px solid #e23b3b;
}
.mark-site {
    left: 226px;
    top: 253px;
    width: 90px;
    height: 27px;
}
.mark-default {
    left: 239px;
    top: 281px;
    width: 141px;
    height: 21px;
}
.arrow-one {
    position: absolute;
    left: 138px;
    top: 271px;
    width: 78px;
    height: 48px;
}
.arrow-two {
    position: absolute;
    left: 326px;
    top: 302px;
    width: 22px;
    height: 100px;
}
.step {
    position: absolute;
    width: 30px;
    height: 30px;
    border-radius: 50%;
    background: #ff3636;
    color: #fff;
    font-size: 20px;
    line-height: 28px;
    text-align: center;
}
.step-one {
    left: 88px;
    top: 304px;
}
.step-two {
    left: 292px;
    top: 399px;
}
.band {
    position: absolute;
    left: 192px;
    right: 0;
    top: 366px;
    height: 117px;
    padding-right: 192px;
    background: rgba(255, 255, 255, .6);
    color: #151011;
    font-family: "Noto Sans CJK SC", sans-serif;
    font-size: 37px;
    line-height: 111px;
    text-align: center;
}
.band strong {
    font-weight: 900;
}
.tip {
    position: absolute;
    left: 336px;
    top: 389px;
    height: 50px;
    padding: 0 18px 0 9px;
    border-radius: 3px;
    background: #c0c0c0;
    color: #fff;
    font-size: 24px;
    line-height: 50px;
}
.tip::before {
    content: "";
    position: absolute;
    left: -7px;
    top: 18px;
    border: 7px solid transparent;
    border-left: 0;
    border-right-color: #c0c0c0;
}
.gadget {
    position: absolute;
    right: 0;
    bottom: 0;
    width: 12px;
    height: 70px;
}
```
